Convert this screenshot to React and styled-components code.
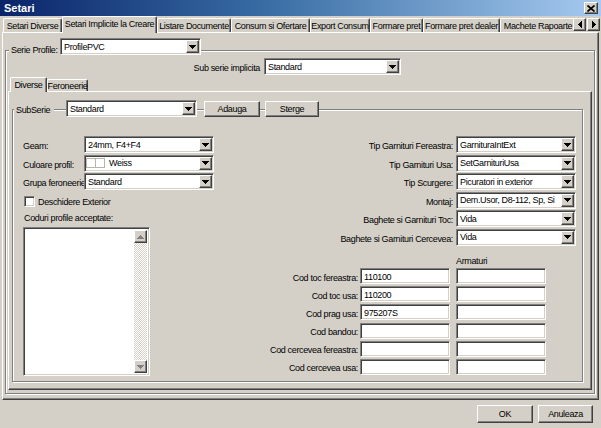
import React from "react";
import styled, { createGlobalStyle } from "styled-components";

const face = "#d4d0c8";
const shadow = "#808080";
const dark = "#404040";
const hilite = "#ffffff";

const GlobalStyle = createGlobalStyle`
  html, body {
    margin: 0;
    padding: 0;
    background: ${face};
  }
  body {
    font-family: "Liberation Sans", Arial, sans-serif;
    font-size: 9px;
    letter-spacing: -0.35px;
    color: #000;
  }
  * {
    box-sizing: border-box;
  }
`;

const raised = `
  border: 1px solid;
  border-color: ${hilite} ${dark} ${dark} ${hilite};
  box-shadow: inset -1px -1px 0 ${shadow};
  background: ${face};
`;

const sunken = `
  border: 1px solid;
  border-color: ${shadow} ${hilite} ${hilite} ${shadow};
  box-shadow: inset 1px 1px 0 ${dark}, inset -1px -1px 0 ${face};
  background: #fff;
`;

const Window = styled.div`
  width: 601px;
  height: 428px;
  background: ${face};
  display: flex;
  flex-direction: column;
  overflow: hidden;
`;

const TitleBar = styled.div`
  height: 16px;
  flex: none;
  display: flex;
  align-items: center;
  justify-content: space-between;
  padding: 0 3px 0 4px;
  background: linear-gradient(90deg, #0a246a 0%, #3a6ea5 45%, #a6caf0 100%);
`;

const TitleText = styled.span`
  color: #fff;
  font-weight: bold;
  font-size: 11px;
  letter-spacing: 0;
`;

const CloseButton = styled.div`
  ${raised}
  width: 14px;
  height: 12px;
  display: flex;
  align-items: center;
  justify-content: center;
`;

const TabStrip = styled.div`
  height: 16px;
  flex: none;
  display: flex;
  align-items: flex-start;
  padding-left: 3px;
  position: relative;
  z-index: 2;
`;

const TabList = styled.div`
  flex: 1;
  height: 17px;
  display: flex;
  align-items: flex-end;
  overflow: hidden;
`;

const Tab = styled.div`
  flex: none;
  width: ${(p) => p.$w}px;
  height: ${(p) => (p.$active ? 17 : 14)}px;
  margin-bottom: ${(p) => (p.$active ? 0 : 1)}px;
  background: ${face};
  border-top: 1px solid ${hilite};
  border-left: 1px solid ${hilite};
  border-right: 1px solid ${dark};
  box-shadow: inset -1px 0 0 ${shadow};
  border-radius: 2px 2px 0 0;
  display: flex;
  align-items: center;
  justify-content: center;
  padding-bottom: ${(p) => (p.$active ? 2 : 0)}px;
  white-space: nowrap;
  overflow: hidden;
`;

const ScrollArrows = styled.div`
  flex: none;
  display: flex;
  gap: 1px;
  padding: 2px 1px 0 0;
`;

const ArrowButton = styled.div`
  ${raised}
  width: 13px;
  height: 13px;
  display: flex;
  align-items: center;
  justify-content: center;
`;

const Page = styled.div`
  flex: 1;
  margin: 0 2px;
  display: flex;
  flex-direction: column;
  border: 1px solid;
  border-color: ${hilite} ${dark} ${dark} ${hilite};
  box-shadow: inset -1px -1px 0 ${shadow};
`;

const GroupBox = styled.div`
  flex: 1;
  display: flex;
  flex-direction: column;
  border: 1px solid ${shadow};
  box-shadow: inset 1px 1px 0 ${hilite}, 1px 1px 0 ${hilite};
`;

const SerieGroup = styled(GroupBox)`
  margin: 17px 3px 5px 2px;
`;

const SubSerieGroup = styled(GroupBox)`
  margin: 17px 8px 7px 3px;
`;

const GroupHeader = styled.div`
  display: flex;
  align-items: center;
  height: 17px;
  margin-top: ${(p) => p.$top}px;
  margin-left: ${(p) => p.$left}px;
`;

const GroupLabel = styled.span`
  flex: none;
  width: ${(p) => p.$w}px;
  background: ${face};
  padding: ${(p) => p.$pt || 0}px 2px 0;
  white-space: nowrap;
  align-self: ${(p) => p.$align || "center"};
`;

const Combo = styled.div`
  ${sunken}
  flex: none;
  width: ${(p) => p.$w || 130}px;
  height: 17px;
  padding: 1px;
  margin-left: ${(p) => p.$ml || 0}px;
  display: flex;
`;

const ComboValue = styled.div`
  flex: 1;
  display: flex;
  align-items: center;
  gap: 4px;
  padding-left: 2px;
  white-space: nowrap;
  overflow: hidden;
`;

const DropButton = styled.div`
  ${raised}
  flex: none;
  width: 13px;
  height: 13px;
  display: flex;
  align-items: center;
  justify-content: center;
`;

const Swatch = styled.div`
  display: flex;
  margin-left: -2px;
`;

const SwatchCell = styled.div`
  width: 10px;
  height: 10px;
  border: 1px solid #b8b4ac;
  background: #fff;
  & + & {
    margin-left: -1px;
  }
`;

const SubSerieRow = styled.div`
  display: flex;
  align-items: center;
  height: 17px;
  margin-top: 3px;
`;

const InlineLabel = styled.span`
  flex: none;
  width: 254px;
  padding-top: 2px;
  text-align: right;
  white-space: nowrap;
`;

const InnerTabStrip = styled.div`
  height: 14px;
  margin: 2px 0 0 2px;
  padding-left: 2px;
  display: flex;
  align-items: flex-end;
  position: relative;
  z-index: 2;
`;

const InnerTab = styled.div`
  flex: none;
  width: ${(p) => p.$w}px;
  height: ${(p) => (p.$active ? 15 : 12)}px;
  margin-bottom: ${(p) => (p.$active ? -1 : 0)}px;
  background: ${face};
  border-top: 1px solid ${hilite};
  border-left: 1px solid ${hilite};
  border-right: 1px solid ${dark};
  box-shadow: inset -1px 0 0 ${shadow};
  border-radius: 2px 2px 0 0;
  display: flex;
  align-items: center;
  justify-content: center;
  padding-bottom: ${(p) => (p.$active ? 1 : 0)}px;
  white-space: nowrap;
`;

const InnerPage = styled(Page)`
  margin: 0 2px 3px 2px;
`;

const Button = styled.div`
  ${raised}
  flex: none;
  width: ${(p) => p.$w}px;
  height: ${(p) => p.$h || 16}px;
  margin-left: ${(p) => p.$ml || 0}px;
  display: flex;
  align-items: center;
  justify-content: center;
  white-space: nowrap;
`;

const Body = styled.div`
  flex: 1;
  display: flex;
  padding-top: 19px;
`;

const LeftColumn = styled.div`
  width: 210px;
  flex: none;
  padding-left: 10px;
  display: flex;
  flex-direction: column;
`;

const FieldGrid = styled.div`
  display: grid;
  grid-template-columns: ${(p) => p.$cols};
  grid-auto-rows: 17px;
  row-gap: 1.5px;
  column-gap: ${(p) => p.$gap || 0}px;
`;

const FieldLabel = styled.div`
  display: flex;
  align-items: center;
  justify-content: ${(p) => (p.$right ? "flex-end" : "flex-start")};
  padding-top: 3px;
  white-space: nowrap;
`;

const CheckRow = styled.label`
  display: flex;
  align-items: center;
  gap: 3px;
  margin: 6px 0 0 1px;
  height: 11px;
`;

const CheckBox = styled.span`
  ${sunken}
  width: 11px;
  height: 11px;
  flex: none;
`;

const Caption = styled.div`
  margin: 5px 0 0 1px;
  line-height: 12px;
  white-space: nowrap;
`;

const ListBox = styled.div`
  ${sunken}
  width: 127px;
  height: 149px;
  margin-top: 3px;
  padding: 2px;
  display: flex;
  justify-content: flex-end;
`;

const ScrollBar = styled.div`
  width: 13px;
  display: flex;
  flex-direction: column;
`;

const ScrollTrack = styled.div`
  flex: 1;
  background-color: ${face};
  background-image: repeating-conic-gradient(#fff 0 25%, ${face} 0 50%);
  background-size: 2px 2px;
`;

const RightColumn = styled.div`
  flex: 1;
  display: flex;
  flex-direction: column;
  align-items: flex-end;
  padding-right: 6px;
`;

const ColumnHeading = styled.div`
  width: 90px;
  margin: 9.5px 30px 0 0;
  line-height: 12px;
`;

const CodeGrid = styled.div`
  display: grid;
  grid-template-columns: max-content 92px 96px;
  grid-auto-rows: 16px;
  row-gap: 2.2px;
  margin: 1px 30px 0 0;
`;

const TextBox = styled.div`
  ${sunken}
  width: 90px;
  height: 16px;
  justify-self: end;
  padding: 1px 3px 0;
  display: flex;
  align-items: center;
`;

const ButtonBar = styled.div`
  height: 28px;
  flex: none;
  display: flex;
  justify-content: flex-end;
  gap: 5px;
  padding: 5px 8px 0 0;
`;

const DownArrow = ({ color = "#000" }) => (
  <svg width="7" height="4" viewBox="0 0 7 4" shapeRendering="crispEdges">
    <path d="M0 0h7v1H0zM1 1h5v1H1zM2 2h3v1H2zM3 3h1v1H3z" fill={color} />
  </svg>
);

const UpArrow = ({ color = "#000" }) => (
  <svg width="7" height="4" viewBox="0 0 7 4" shapeRendering="crispEdges">
    <path d="M3 0h1v1H3zM2 1h3v1H2zM1 2h5v1H1zM0 3h7v1H0z" fill={color} />
  </svg>
);

const SideArrow = ({ dir }) => (
  <svg width="4" height="7" viewBox="0 0 4 7" shapeRendering="crispEdges">
    {dir === "left" ? (
      <path d="M0 3h1v1H0zM1 2h1v3H1zM2 1h1v5H2zM3 0h1v7H3z" fill="#000" />
    ) : (
      <path d="M0 0h1v7H0zM1 1h1v5H1zM2 2h1v3H2zM3 3h1v1H3z" fill="#000" />
    )}
  </svg>
);

const ComboBox = ({ value, w, ml, children }) => (
  <Combo $w={w} $ml={ml}>
    <ComboValue>
      {children}
      {value}
    </ComboValue>
    <DropButton>
      <DownArrow />
    </DropButton>
  </Combo>
);

const mainTabs = [
  { label: "Setari Diverse", w: 59 },
  { label: "Setari Implicite la Creare", w: 95, active: true },
  { label: "Listare Documente", w: 74 },
  { label: "Consum si Ofertare", w: 79 },
  { label: "Export Consum", w: 60 },
  { label: "Formare pret", w: 53 },
  { label: "Formare pret dealer", w: 77 },
  { label: "Machete Rapoarte", w: 76 },
];

const leftFields = [
  { label: "Geam:", value: "24mm, F4+F4" },
  { label: "Culoare profil:", value: "Weiss", swatch: true },
  { label: "Grupa feroneerie:", value: "Standard" },
];

const rightFields = [
  { label: "Tip Garnituri Fereastra:", value: "GarnituraIntExt" },
  { label: "Tip Garnituri Usa:", value: "SetGarnituriUsa" },
  { label: "Tip Scurgere:", value: "Picuratori in exterior" },
  { label: "Montaj:", value: "Dem.Usor, D8-112, Sp, Si" },
  { label: "Baghete si Garnituri Toc:", value: "Vida" },
  { label: "Baghete si Garnituri Cercevea:", value: "Vida" },
];

const codes = [
  { label: "Cod toc fereastra:", value: "110100" },
  { label: "Cod toc usa:", value: "110200" },
  { label: "Cod prag usa:", value: "975207S" },
  { label: "Cod bandou:", value: "" },
  { label: "Cod cercevea fereastra:", value: "" },
  { label: "Cod cercevea usa:", value: "" },
];

export default function App() {
  return (
    <>
      <GlobalStyle />
      <Window>
        <TitleBar>
          <TitleText>Setari</TitleText>
          <CloseButton>
            <svg width="8" height="7" viewBox="0 0 8 7">
              <path d="M0.5 0.5L7.5 6.5M7.5 0.5L0.5 6.5" stroke="#000" strokeWidth="1.7" />
            </svg>
          </CloseButton>
        </TitleBar>

        <TabStrip>
          <TabList>
            {mainTabs.map((t) => (
              <Tab key={t.label} $w={t.w} $active={t.active}>
                {t.label}
              </Tab>
            ))}
          </TabList>
          <ScrollArrows>
            <ArrowButton>
              <SideArrow dir="left" />
            </ArrowButton>
            <ArrowButton>
              <SideArrow dir="right" />
            </ArrowButton>
          </ScrollArrows>
        </TabStrip>

        <Page>
          <SerieGroup>
            <GroupHeader $top={-13} $left={3}>
              <GroupLabel $w={51} $pt={5} $align="flex-end">
                Serie Profile:
              </GroupLabel>
              <ComboBox value="ProfilePVC" w={141} />
            </GroupHeader>

            <SubSerieRow>
              <InlineLabel>Sub serie implicita</InlineLabel>
              <ComboBox value="Standard" w={137} ml={4} />
            </SubSerieRow>

            <InnerTabStrip>
              <InnerTab $w={37} $active>
                Diverse
              </InnerTab>
              <InnerTab $w={41}>Feroneerie</InnerTab>
            </InnerTabStrip>

            <InnerPage>
              <SubSerieGroup>
                <GroupHeader $top={-10} $left={1}>
                  <GroupLabel $w={40} $pt={2}>
                    SubSerie
                  </GroupLabel>
                  <ComboBox value="Standard" w={131} ml={12} />
                  <Button $w={56} $ml={7}>
                    Adauga
                  </Button>
                  <Button $w={54} $ml={5}>
                    Sterge
                  </Button>
                </GroupHeader>

                <Body>
                  <LeftColumn>
                    <FieldGrid $cols="61px 130px">
                      {leftFields.map((f) => (
                        <React.Fragment key={f.label}>
                          <FieldLabel>{f.label}</FieldLabel>
                          <ComboBox value={f.value} w={130}>
                            {f.swatch && (
                              <Swatch>
                                <SwatchCell />
                                <SwatchCell />
                              </Swatch>
                            )}
                          </ComboBox>
                        </React.Fragment>
                      ))}
                    </FieldGrid>
                    <CheckRow>
                      <CheckBox />
                      Deschidere Exterior
                    </CheckRow>
                    <Caption>Coduri profile acceptate:</Caption>
                    <ListBox>
                      <ScrollBar>
                        <ArrowButton>
                          <UpArrow color={shadow} />
                        </ArrowButton>
                        <ScrollTrack />
                        <ArrowButton>
                          <DownArrow color={shadow} />
                        </ArrowButton>
                      </ScrollBar>
                    </ListBox>
                  </LeftColumn>

                  <RightColumn>
                    <FieldGrid $cols="max-content 120px" $gap={3}>
                      {rightFields.map((f) => (
                        <React.Fragment key={f.label}>
                          <FieldLabel $right>{f.label}</FieldLabel>
                          <ComboBox value={f.value} w={120} />
                        </React.Fragment>
                      ))}
                    </FieldGrid>
                    <ColumnHeading>Armaturi</ColumnHeading>
                    <CodeGrid>
                      {codes.map((c) => (
                        <React.Fragment key={c.label}>
                          <FieldLabel $right>{c.label}</FieldLabel>
                          <TextBox>{c.value}</TextBox>
                          <TextBox />
                        </React.Fragment>
                      ))}
                    </CodeGrid>
                  </RightColumn>
                </Body>
              </SubSerieGroup>
            </InnerPage>
          </SerieGroup>
        </Page>

        <ButtonBar>
          <Button $w={56} $h={18}>
            OK
          </Button>
          <Button $w={55} $h={18}>
            Anuleaza
          </Button>
        </ButtonBar>
      </Window>
    </>
  );
}
